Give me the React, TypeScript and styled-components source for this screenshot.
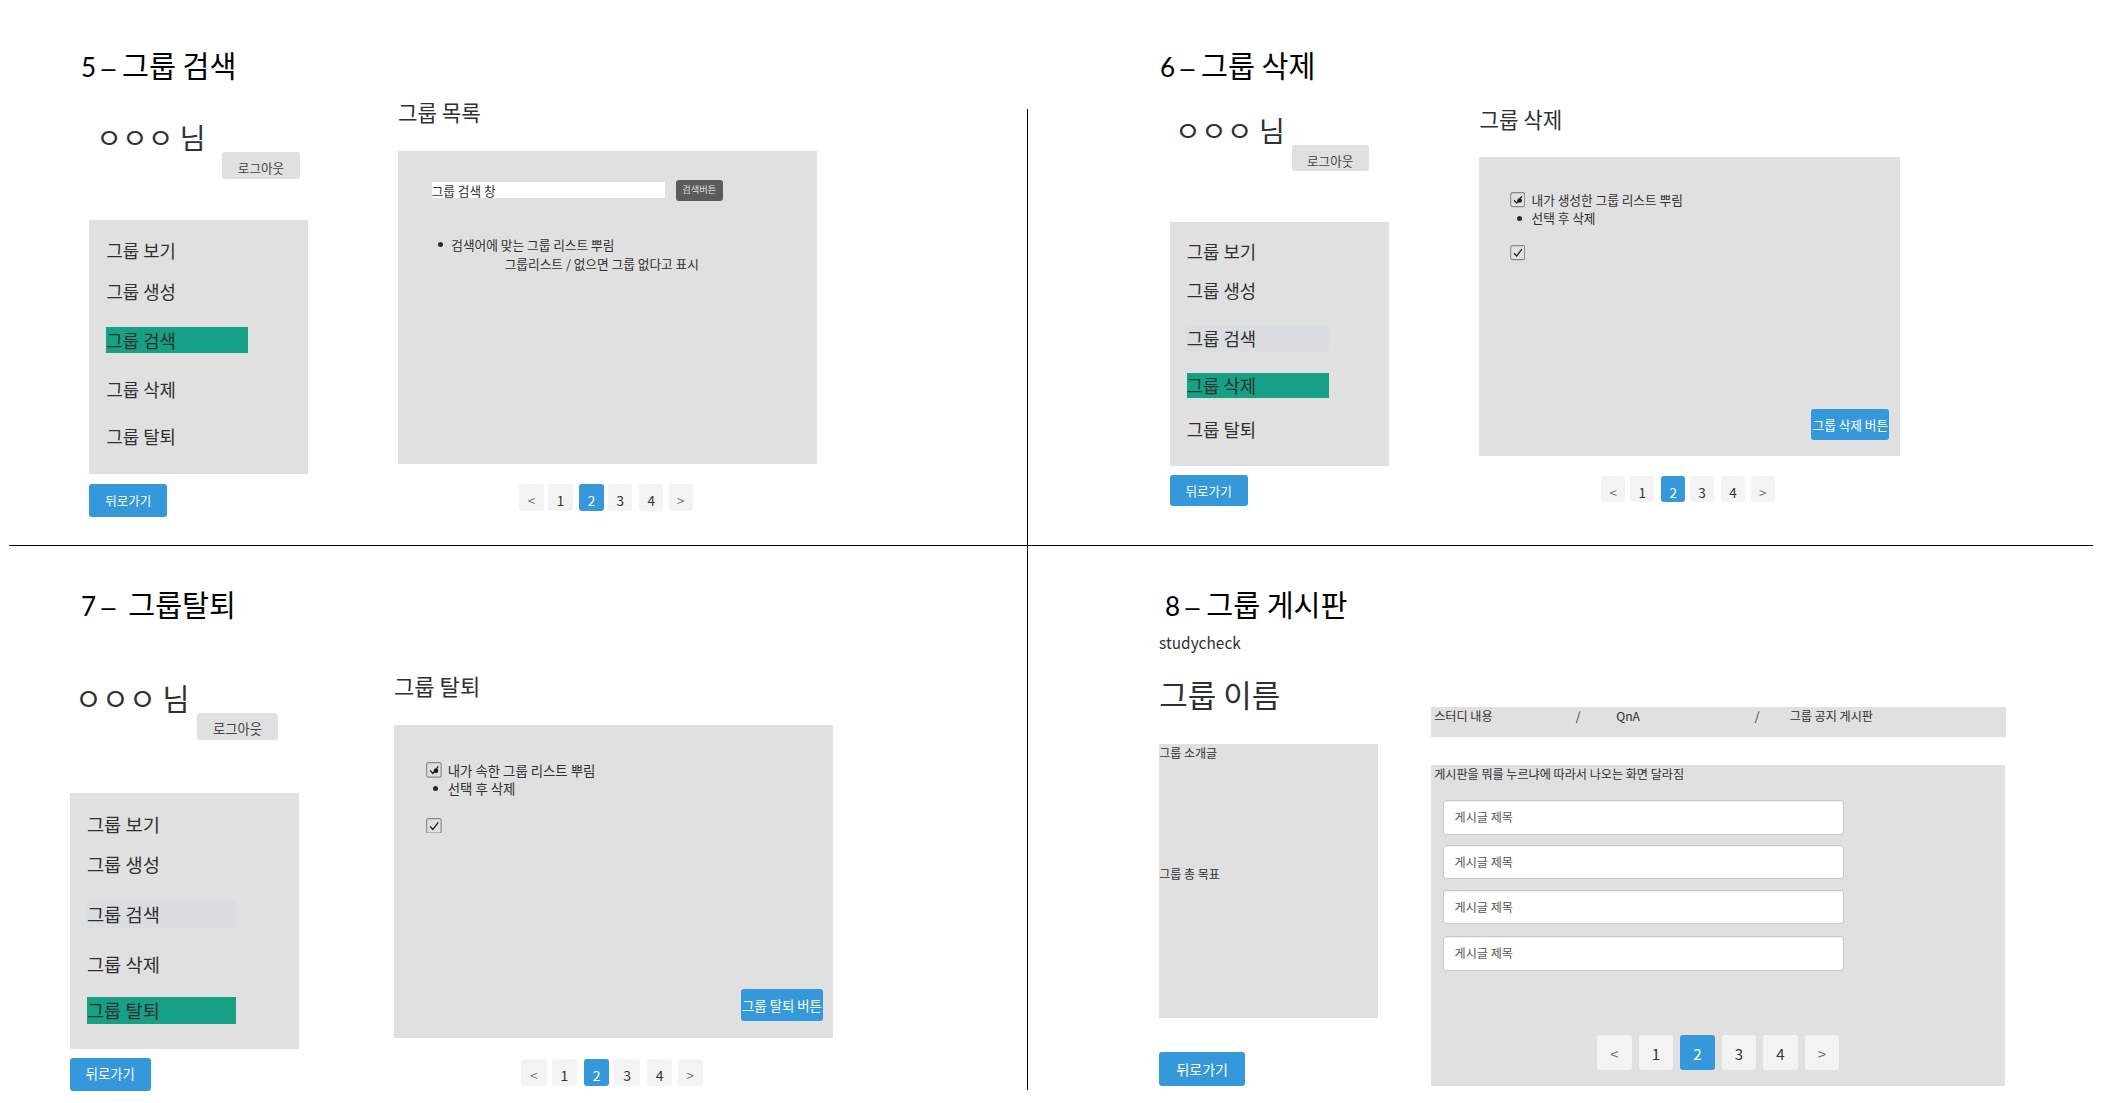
import React from 'react';
import styled, { createGlobalStyle } from 'styled-components';

const GlobalStyle = createGlobalStyle`
  * { box-sizing: border-box; }
  body {
    margin: 0;
    background: #fff;
    color: #303030;
    font-family: "Noto Sans CJK KR", sans-serif;
    overflow: hidden;
  }
  h1, h2, p, ul { margin: 0; padding: 0; font-weight: 400; }
  button { border: 0; padding: 0; font-family: inherit; }
`;

const Board = styled.main`
  display: grid;
  grid-template-columns: 1027px 1px 1077px;
  grid-template-rows: 545px 1px 557px;
  width: 2105px;
  height: 1103px;
`;

const VerticalRule = styled.div`
  grid-column: 2;
  grid-row: 1 / -1;
  margin: 109px 0 13px;
  background: #000;
`;

const HorizontalRule = styled.div`
  grid-column: 1 / -1;
  grid-row: 2;
  margin: 0 12px 0 9px;
  background: #000;
`;

const Slide = styled.section<{ $col: number; $row: number; $top: number }>`
  grid-column: ${p => p.$col};
  grid-row: ${p => p.$row};
  padding-top: ${p => p.$top}px;
  min-width: 0;
  min-height: 0;
`;

const SlideTitle = styled.h1<{ $left: number }>`
  display: flex;
  align-items: baseline;
  height: 40px;
  padding-left: ${p => p.$left}px;
  color: #000;
  font-size: 29.3px;
  line-height: 40px;
  white-space: pre;
`;

const SlideNumber = styled.span<{ $width: number }>`
  display: flex;
  align-items: baseline;
  gap: 5.4px;
  width: ${p => p.$width}px;
  font-family: Lato, sans-serif;
  font-size: 26px;
`;

const Dash = styled.span`
  font-family: "Liberation Sans", sans-serif;
  font-size: 25px;
`;

const Columns = styled.div<{ $left: number }>`
  display: flex;
  align-items: flex-start;
  margin-top: 1.4px;
  padding-left: ${p => p.$left}px;
`;

const Side = styled.aside<{ $width: number }>`
  display: flex;
  flex-direction: column;
  align-items: flex-start;
  flex: none;
  width: ${p => p.$width}px;
`;

const Content = styled.div<{ $left: number; $width: number }>`
  display: flex;
  flex-direction: column;
  flex: none;
  width: ${p => p.$width}px;
  margin-left: ${p => p.$left}px;
`;

const UserName = styled.p<{ $gap: number; $left: number; $size: number }>`
  height: 30px;
  margin: ${p => p.$gap}px 0 0 ${p => p.$left}px;
  font-size: ${p => p.$size}px;
  line-height: 30px;
  white-space: pre;
`;

const LogoutButton = styled.button<{ $gap: number; $left: number; $w: number; $h: number; $size: number }>`
  width: ${p => p.$w}px;
  height: ${p => p.$h}px;
  margin: ${p => p.$gap}px 0 0 ${p => p.$left}px;
  padding-top: 5px;
  border-radius: 3px;
  background: #e0e0e0;
  color: #444;
  font-size: ${p => p.$size}px;
  line-height: ${p => p.$h - 5}px;
`;

const MenuPanel = styled.ul<{ $gap: number; $h: number; $top: number }>`
  width: 100%;
  height: ${p => p.$h}px;
  margin-top: ${p => p.$gap}px;
  padding: ${p => p.$top}px 0 0 17.2px;
  background: #e0e0e0;
  list-style: none;
`;

const MenuItem = styled.li<{ $gap: number; $w: number; $h: number; $size: number; $tone: string }>`
  width: ${p => p.$w}px;
  height: ${p => p.$h}px;
  margin-top: ${p => p.$gap}px;
  background: ${p => p.$tone};
  font-size: ${p => p.$size}px;
  line-height: ${p => p.$h}px;
`;

const PrimaryButton = styled.button<{ $gap?: number; $w: number; $h: number; $size: number }>`
  flex: none;
  width: ${p => p.$w}px;
  height: ${p => p.$h}px;
  margin-top: ${p => p.$gap ?? 0}px;
  border-radius: 3px;
  background: #3498db;
  color: #fff;
  font-size: ${p => p.$size}px;
  line-height: ${p => p.$h}px;
  white-space: nowrap;
`;

const Heading = styled.h2<{ $gap: number; $size: number }>`
  height: 30px;
  margin-top: ${p => p.$gap}px;
  font-size: ${p => p.$size}px;
  line-height: 30px;
`;

const Panel = styled.div<{ $gap: number; $h: number; $pad: string }>`
  display: flex;
  flex-direction: column;
  height: ${p => p.$h}px;
  margin-top: ${p => p.$gap}px;
  padding: ${p => p.$pad};
  background: #e0e0e0;
`;

const SearchRow = styled.div`
  display: flex;
  align-items: center;
  gap: 11px;
  height: 21px;
`;

const SearchField = styled.div`
  width: 233.3px;
  height: 16.5px;
  background: #fff;
  font-size: 12.7px;
  line-height: 17.5px;
`;

const SearchButton = styled.button`
  width: 46.7px;
  height: 21px;
  border-radius: 3px;
  background: #5c5c5c;
  color: #dcdcdc;
  font-size: 9.3px;
  line-height: 18px;
  padding-bottom: 3px;
`;

const Note = styled.p<{ $gap?: number; $left?: number; $h: number; $size: number }>`
  display: flex;
  align-items: center;
  height: ${p => p.$h}px;
  margin: ${p => p.$gap ?? 0}px 0 0 ${p => p.$left ?? 0}px;
  font-size: ${p => p.$size}px;
  line-height: ${p => p.$h}px;
  white-space: nowrap;
`;

const Dot = styled.span<{ $left: number; $right: number }>`
  flex: none;
  width: 5px;
  height: 5px;
  margin: 1px ${p => p.$right}px 0 ${p => p.$left}px;
  border-radius: 50%;
  background: #2b2b2b;
`;

const CheckSvg = styled.svg<{ $gap?: number }>`
  flex: none;
  display: block;
  margin: ${p => p.$gap ?? 0}px 6px 0 0;
`;

const PanelFooter = styled.div`
  display: flex;
  justify-content: flex-end;
  margin-top: auto;
`;

const Pager = styled.nav<{ $gap: number; $left: number }>`
  display: flex;
  margin: ${p => p.$gap}px 0 0 ${p => p.$left}px;
`;

const PageButton = styled.button<{ $before: number; $w: number; $h: number; $size: number; $drop: number; $kind: string }>`
  flex: none;
  width: ${p => p.$w}px;
  height: ${p => p.$h}px;
  margin-left: ${p => p.$before}px;
  padding-top: ${p => p.$drop}px;
  border-radius: 3px;
  background: ${p => (p.$kind === 'current' ? '#3498db' : '#f3f3f3')};
  color: ${p => (p.$kind === 'current' ? '#fff' : p.$kind === 'arrow' ? '#777' : '#333')};
  font-size: ${p => p.$size}px;
  line-height: ${p => p.$h - p.$drop}px;
`;

const Brand = styled.p`
  height: 24px;
  margin-top: 5.5px;
  font-size: 16.6px;
  line-height: 24px;
  transform: scaleX(0.93);
  transform-origin: left;
`;

const GroupName = styled.h2`
  height: 44px;
  margin-top: 18px;
  font-size: 31px;
  line-height: 44px;
`;

const InfoPanel = styled.div`
  display: flex;
  flex-direction: column;
  gap: 102.6px;
  width: 100%;
  height: 274px;
  margin-top: 28.5px;
  background: #e0e0e0;
`;

const TabBar = styled.nav`
  display: flex;
  width: 575px;
  height: 30px;
  margin-top: 83px;
  padding-left: 3px;
  background: #e0e0e0;
  font-size: 12.1px;
  line-height: 17.5px;
`;

const Tab = styled.span<{ $w: number }>`
  flex: none;
  width: ${p => p.$w}px;
`;

const PostField = styled.div<{ $gap: number }>`
  flex: none;
  width: 401.5px;
  height: 34.5px;
  margin: ${p => p.$gap}px 0 0 8.4px;
  padding-left: 11px;
  border: 1px solid #c9c9c9;
  border-radius: 3px;
  background: #fff;
  box-shadow: inset 0 1px 1px rgba(0, 0, 0, 0.06);
  color: #555;
  font-size: 12.1px;
  line-height: 31px;
`;

function Check({ size, dotted, gap }: { size: number; dotted?: boolean; gap?: number }) {
  return (
    <CheckSvg $gap={gap} width={size} height={size} viewBox="0 0 16 16" fill="none">
      <rect x="0.7" y="0.7" width="14.6" height="14.6" rx="2" stroke="#8a8a8a" strokeWidth="1.2" />
      <path d="M4.2 8.6 L7 11.6 L12.4 4.4" stroke="#1c1c1c" strokeWidth="1.3" />
      {dotted && <circle cx="10.1" cy="8.9" r="2.4" fill="#1c1c1c" />}
    </CheckSvg>
  );
}

interface PagesProps {
  gap: number;
  left: number;
  w: number;
  h: number;
  size: number;
  drop: number;
  gaps: number[];
}

function Pages({ gap, left, w, h, size, drop, gaps }: PagesProps) {
  return (
    <Pager $gap={gap} $left={left}>
      {['<', '1', '2', '3', '4', '>'].map((label, i) => (
        <PageButton
          key={label}
          $before={i ? gaps[i - 1] : 0}
          $w={w}
          $h={h}
          $size={size}
          $drop={drop}
          $kind={label === '2' ? 'current' : i === 0 || i === 5 ? 'arrow' : 'page'}
        >
          {label}
        </PageButton>
      ))}
    </Pager>
  );
}

const MENU = ['그룹 보기', '그룹 생성', '그룹 검색', '그룹 삭제', '그룹 탈퇴'];

interface SideMenuProps {
  width: number;
  user: { gap: number; left: number; size: number };
  logout: { gap: number; left: number; w: number; h: number; size: number };
  menu: { gap: number; h: number; top: number; gaps: number[]; itemW: number; itemH: number; size: number };
  back: { gap: number; w: number; h: number; size: number };
  active: number;
}

function SideMenu({ width, user, logout, menu, back, active }: SideMenuProps) {
  const tone = (i: number) => (i === active ? '#16a085' : i === 2 ? '#dadee0' : 'transparent');
  return (
    <Side $width={width}>
      <UserName $gap={user.gap} $left={user.left} $size={user.size}>ㅇㅇㅇ 님</UserName>
      <LogoutButton $gap={logout.gap} $left={logout.left} $w={logout.w} $h={logout.h} $size={logout.size}>
        로그아웃
      </LogoutButton>
      <MenuPanel $gap={menu.gap} $h={menu.h} $top={menu.top}>
        {MENU.map((label, i) => (
          <MenuItem
            key={label}
            $gap={i ? menu.gaps[i - 1] : 0}
            $w={menu.itemW}
            $h={menu.itemH}
            $size={menu.size}
            $tone={tone(i)}
          >
            {label}
          </MenuItem>
        ))}
      </MenuPanel>
      <PrimaryButton $gap={back.gap} $w={back.w} $h={back.h} $size={back.size}>뒤로가기</PrimaryButton>
    </Side>
  );
}

function Title({ left, no, width, children }: { left: number; no: string; width: number; children: string }) {
  return (
    <SlideTitle $left={left}>
      <SlideNumber $width={width}><span>{no}</span><Dash>–</Dash></SlideNumber>
      {children}
    </SlideTitle>
  );
}

function SearchSlide() {
  return (
    <Slide $col={1} $row={1} $top={44}>
      <Title left={81} no="5" width={41}>그룹 검색</Title>
      <Columns $left={89.3}>
        <SideMenu
          width={218.7}
          active={2}
          user={{ gap: 36.8, left: 7, size: 28 }}
          logout={{ gap: 0.2, left: 133, w: 77.4, h: 26.7, size: 12.6 }}
          menu={{ gap: 40.8, h: 254.5, top: 17.6, gaps: [14.7, 23.2, 23.1, 20.7], itemW: 142, itemH: 26, size: 17.8 }}
          back={{ gap: 9.5, w: 77.8, h: 33.2, size: 12.5 }}
        />
        <Content $left={90} $width={418.7}>
          <Heading $gap={11.6} $size={21.2}>그룹 목록</Heading>
          <Panel $gap={24} $h={312.6} $pad="28.7px 10px 16px 33.7px">
            <SearchRow>
              <SearchField>그룹 검색 창</SearchField>
              <SearchButton>검색버튼</SearchButton>
            </SearchRow>
            <Note $gap={34.2} $h={19.2} $size={12.7}>
              <Dot $left={6} $right={8.6} />검색어에 맞는 그룹 리스트 뿌림
            </Note>
            <Note $left={73} $h={19.2} $size={12.7}>그룹리스트 / 없으면 그룹 없다고 표시</Note>
          </Panel>
          <Pages gap={20.5} left={121.3} w={24.3} h={27} size={13.5} drop={6} gaps={[4.7, 6.7, 4.5, 6.7, 5.3]} />
        </Content>
      </Columns>
    </Slide>
  );
}

function DeleteSlide() {
  return (
    <Slide $col={3} $row={1} $top={44}>
      <Title left={132} no="6" width={41}>그룹 삭제</Title>
      <Columns $left={141.5}>
        <SideMenu
          width={219.7}
          active={3}
          user={{ gap: 29.5, left: 5.6, size: 28.1 }}
          logout={{ gap: 0.6, left: 122, w: 77.3, h: 26, size: 12.6 }}
          menu={{ gap: 50.5, h: 244, top: 16.9, gaps: [13.9, 22.9, 22.2, 19], itemW: 142, itemH: 25, size: 17.8 }}
          back={{ gap: 9, w: 78.2, h: 31.5, size: 12.6 }}
        />
        <Content $left={90.3} $width={420.2}>
          <Heading $gap={18.6} $size={21.2}>그룹 삭제</Heading>
          <Panel $gap={22.9} $h={299.5} $pad="34.4px 10.2px 16px 30.7px">
            <Note $h={17.5} $size={12.7}><Check size={15.3} dotted />내가 생성한 그룹 리스트 뿌림</Note>
            <Note $h={17.5} $size={12.7}><Dot $left={7} $right={9.3} />선택 후 삭제</Note>
            <Check size={15.3} gap={19.1} />
            <PanelFooter>
              <PrimaryButton $w={78.3} $h={31.7} $size={12.7}>그룹 삭제 버튼</PrimaryButton>
            </PanelFooter>
          </Panel>
          <Pages gap={19.7} left={121.7} w={24.3} h={26} size={13.5} drop={6} gaps={[4.7, 6.7, 4.5, 6.7, 5.3]} />
        </Content>
      </Columns>
    </Slide>
  );
}

function LeaveSlide() {
  return (
    <Slide $col={1} $row={3} $top={37}>
      <Title left={81} no="7" width={47.2}>그룹탈퇴</Title>
      <Columns $left={69.7}>
        <SideMenu
          width={229.3}
          active={4}
          user={{ gap: 57.4, left: 5.4, size: 29.3 }}
          logout={{ gap: 1.7, left: 127.3, w: 81, h: 26.5, size: 13.3 }}
          menu={{ gap: 53.4, h: 256, top: 17.5, gaps: [13.9, 23.6, 22.7, 20.2], itemW: 149, itemH: 26.5, size: 18.7 }}
          back={{ gap: 9, w: 81.3, h: 32.4, size: 13.3 }}
        />
        <Content $left={95} $width={439}>
          <Heading $gap={45.9} $size={22.1}>그룹 탈퇴</Heading>
          <Panel $gap={25} $h={312.7} $pad="35.6px 10px 17px 32px">
            <Note $h={18} $size={13.4}><Check size={15.8} dotted />내가 속한 그룹 리스트 뿌림</Note>
            <Note $h={18} $size={13.4}><Dot $left={7.3} $right={9.5} />선택 후 삭제</Note>
            <Check size={15.8} gap={20.7} />
            <PanelFooter>
              <PrimaryButton $w={82} $h={32.4} $size={13.4}>그룹 탈퇴 버튼</PrimaryButton>
            </PanelFooter>
          </Panel>
          <Pages gap={21.3} left={127.3} w={25.4} h={27} size={14} drop={6} gaps={[5, 7, 5, 7, 5.3]} />
        </Content>
      </Columns>
    </Slide>
  );
}

function BoardSlide() {
  return (
    <Slide $col={3} $row={3} $top={37}>
      <Title left={137} no="8" width={41.2}>그룹 게시판</Title>
      <Columns $left={131.2}>
        <Side $width={218.7}>
          <Brand>studycheck</Brand>
          <GroupName>그룹 이름</GroupName>
          <InfoPanel>
            <Note $h={18} $size={12}>그룹 소개글</Note>
            <Note $h={18} $size={12}>그룹 총 목표</Note>
          </InfoPanel>
          <PrimaryButton $gap={34} $w={86} $h={34} $size={14}>뒤로가기</PrimaryButton>
        </Side>
        <Content $left={53.3} $width={574}>
          <TabBar>
            <Tab $w={141.6}>스터디 내용</Tab>
            <Tab $w={40.4}>/</Tab>
            <Tab $w={138.5}>QnA</Tab>
            <Tab $w={35}>/</Tab>
            <Tab $w={100}>그룹 공지 게시판</Tab>
          </TabBar>
          <Panel $gap={28} $h={321} $pad="0 0 0 3px">
            <Note $h={17} $size={12.1}>게시판을 뭐를 누르냐에 따라서 나오는 화면 달라짐</Note>
            <PostField $gap={17.7}>게시글 제목</PostField>
            <PostField $gap={10.3}>게시글 제목</PostField>
            <PostField $gap={10.3}>게시글 제목</PostField>
            <PostField $gap={12.2}>게시글 제목</PostField>
            <Pages gap={64.5} left={163} w={34.5} h={35} size={15} drop={2} gaps={[7, 7, 7, 7, 7]} />
          </Panel>
        </Content>
      </Columns>
    </Slide>
  );
}

export default function App() {
  return (
    <>
      <GlobalStyle />
      <Board>
        <SearchSlide />
        <DeleteSlide />
        <VerticalRule />
        <HorizontalRule />
        <LeaveSlide />
        <BoardSlide />
      </Board>
    </>
  );
}
